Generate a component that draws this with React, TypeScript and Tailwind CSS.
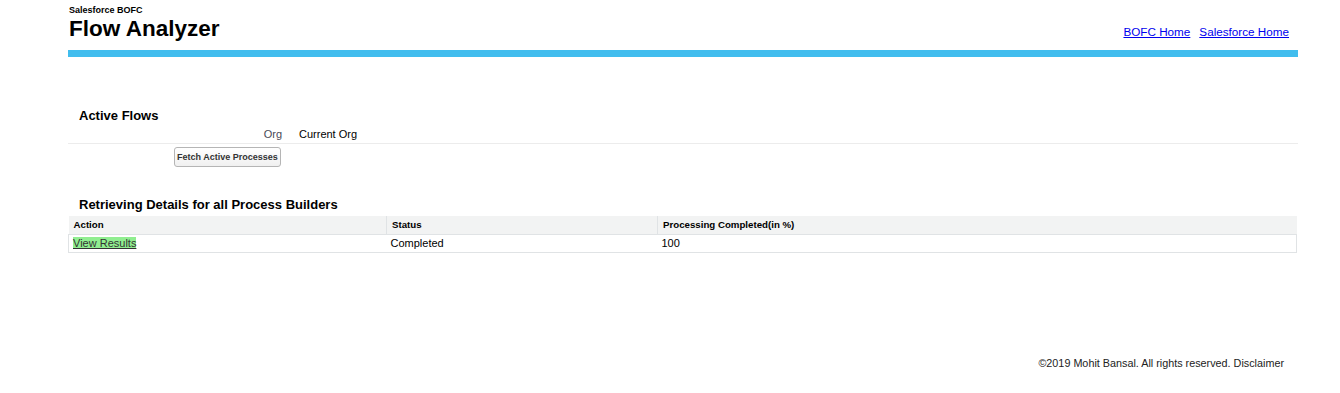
import React from 'react';

const rows = [{ action: 'View Results', status: 'Completed', pct: '100' }];

export default function App() {
  return (
    <div className="min-h-[393px] bg-white text-black" style={{ fontFamily: '"Liberation Sans", Arial, sans-serif' }}>
      <div className="ml-[68px] w-[1230px]">
        {/* header */}
        <div className="flex items-end justify-between pt-[5px]">
          <div className="pl-[1px]">
            <div className="text-[9px] font-bold leading-[11px]">Salesforce BOFC</div>
            <h1 className="text-[22.5px] font-bold leading-[26px]">Flow Analyzer</h1>
          </div>
          <div className="flex gap-[9px] pr-[9px] pb-[3px] text-[11.7px] leading-[14px]">
            <a href="#" className="text-[#0000ee] underline">BOFC Home</a>
            <a href="#" className="text-[#0000ee] underline">Salesforce Home</a>
          </div>
        </div>
        <div className="mt-[8px] h-[7px] bg-[#41bdee]" />

        {/* active flows */}
        <div className="mt-[51px]">
          <h2 className="pl-[11px] text-[13px] font-bold leading-[16px]">Active Flows</h2>
          <div className="mt-[4px] flex text-[11px] leading-[13px]">
            <div className="w-[216px] pr-[2px] text-right text-[#4a4a56]">Org</div>
            <div className="pl-[15px]">Current Org</div>
          </div>
          <div className="mt-[2px] border-t border-[#ececec]" />
          <div className="mt-[3px] flex pl-[106px]">
            <button className="h-[20px] rounded-[3px] border border-[#b5b5b5] bg-gradient-to-b from-white to-[#f0f0f0] px-[2px] text-[9px] font-bold leading-[11px] text-[#333]">
              Fetch Active Processes
            </button>
          </div>
        </div>

        {/* process builders */}
        <div className="mt-[30px]">
          <h2 className="pl-[11px] text-[13px] font-bold leading-[16px]">Retrieving Details for all Process Builders</h2>
          <table className="mt-[3px] w-[1229px] border-collapse text-[11px] leading-[13px]">
            <thead>
              <tr className="bg-[#f2f3f3] h-[18px]">
                <th className="w-[318px] border-r border-[#e0e3e5] pl-[5px] text-left text-[9.7px] font-bold">Action</th>
                <th className="w-[271px] border-r border-[#e0e3e5] pl-[5px] text-left text-[9.7px] font-bold">Status</th>
                <th className="pl-[5px] text-left text-[9.7px] font-bold">Processing Completed(in %)</th>
              </tr>
            </thead>
            <tbody>
              {rows.map((r) => (
                <tr key={r.action} className="h-[18px] border border-[#e0e3e5]">
                  <td className="pl-[4px]">
                    <a href="#" className="bg-[#90ee90] text-[#333] underline">{r.action}</a>
                  </td>
                  <td className="pl-[4px]">{r.status}</td>
                  <td className="pl-[4px]">{r.pct}</td>
                </tr>
              ))}
            </tbody>
          </table>
        </div>

        {/* footer */}
        <div className="mt-[104px] pr-[14px] text-right text-[10.8px] leading-[13px] text-[#222]">
          ©2019 Mohit Bansal. All rights reserved. Disclaimer
        </div>
      </div>
    </div>
  );
}
